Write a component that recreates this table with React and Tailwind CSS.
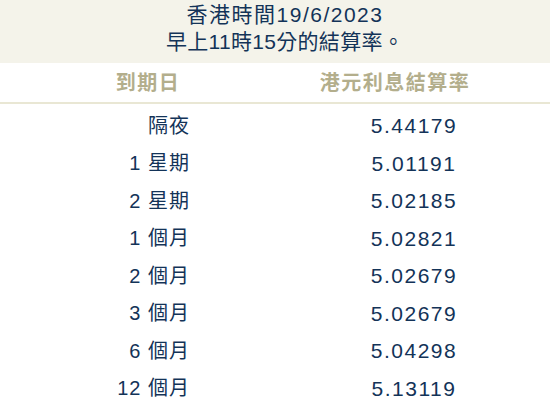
export default function App() {
  const rows = [
    ["隔夜", "5.44179"],
    ["1 星期", "5.01191"],
    ["2 星期", "5.02185"],
    ["1 個月", "5.02821"],
    ["2 個月", "5.02679"],
    ["3 個月", "5.02679"],
    ["6 個月", "5.04298"],
    ["12 個月", "5.13119"],
  ];
  const font = { fontFamily: '"Liberation Sans", "Noto Sans CJK TC", sans-serif' };
  return (
    <div className="w-[550px] h-[414px] bg-white overflow-hidden text-[#133358]" style={font}>
      <div className="h-[63px] bg-[#f4f3ea] flex flex-col items-center pl-[20px] pt-[1px]">
        <div className="text-[21px] leading-[27px] tracking-[1.5px]">香港時間19/6/2023</div>
        <div className="text-[21px] leading-[28px] tracking-[0.3px]">早上11時15分的結算率。</div>
      </div>
      <div className="flex h-[41px] items-center border-b-2 border-[#e9e7d4] text-[#b3ae8c] font-bold text-[20px] tracking-[1.5px]">
        <div className="w-[296px] text-center">到期日</div>
        <div className="w-[198px] text-center">港元利息結算率</div>
      </div>
      <div className="pt-[3px]">
        {rows.map(([a, b]) => (
          <div key={b + a} className="flex h-[37.5px] items-center text-[20px]">
            <div className="w-[190px] text-right tracking-[1px]">{a}</div>
            <div className="ml-[110px] w-[228px] text-center text-[21px] tracking-[1.5px]">{b}</div>
          </div>
        ))}
      </div>
    </div>
  );
}
